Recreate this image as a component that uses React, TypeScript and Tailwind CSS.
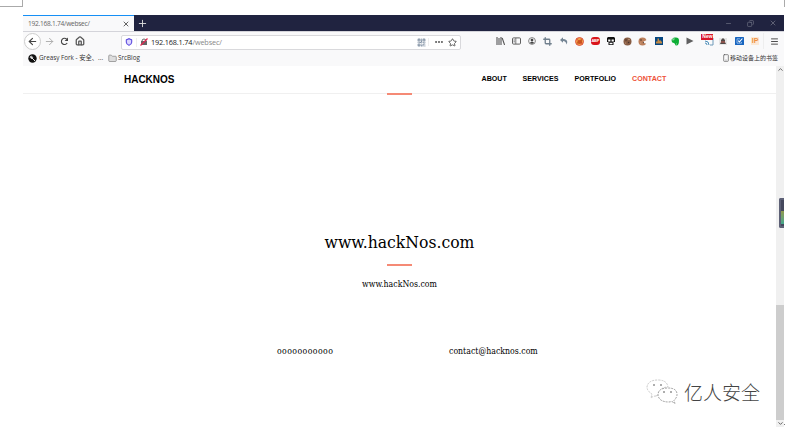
import React from "react";
import {
  ArrowLeft, ArrowRight, House, X, Plus, Shield, Star, Ellipsis,
  Crop, Menu, Minus, Copy, ChevronUp, ChevronDown, Folder, Smartphone, QrCode,
} from "lucide-react";

const ui = "font-['Open_Sans','Noto_Sans_CJK_SC',sans-serif]";
const serif = "font-['DejaVu_Serif_Condensed','DejaVu_Serif',serif] [font-stretch:condensed]";

function Slot({ children }: { children: React.ReactNode }) {
  return <span className="flex h-4 w-[15.87px] shrink-0 items-center justify-center">{children}</span>;
}

function Cookie({ bitten = false }: { bitten?: boolean }) {
  return (
    <svg width="9" height="9" viewBox="0 0 9 9">
      <circle cx="4.5" cy="4.5" r="4" fill={bitten ? "#bc805c" : "#875c43"} />
      <circle cx="3" cy="3" r=".8" fill="#49352c" />
      <circle cx="5.6" cy="5.5" r=".8" fill="#49352c" />
      <circle cx="2.7" cy="6" r=".6" fill="#d1aa8b" />
      {bitten ? <path d="M5.5 4.5 9 3v4L6 6Z" fill="#f9f9fa" /> : <circle cx="6" cy="2.5" r=".7" fill="#d1aa8b" />}
    </svg>
  );
}

function Extensions() {
  return (
    <div className="flex items-center text-[#555]">
      <Slot>
        <svg width="9" height="8" viewBox="0 0 9 8" stroke="#555" strokeWidth="1.1"><path d="M1 0v8M3 1v7M5 0v8M6.2 1l2.4 7" /></svg>
      </Slot>
      <Slot>
        <svg width="9" height="8" viewBox="0 0 9 8" fill="none" stroke="#606060"><rect x=".5" y=".9" width="8" height="6.2" rx="1" /><path d="M3.8 1v6M1.5 3h1.5M1.5 4.8h1.5" strokeWidth=".8" /></svg>
      </Slot>
      <Slot>
        <svg width="8" height="8" viewBox="0 0 8 8"><circle cx="4" cy="4" r="3.4" fill="none" stroke="#777" strokeWidth=".9" /><circle cx="4" cy="3.1" r="1.4" fill="#444" /><path d="M1.8 6Q4 3.4 6.2 6Q4 7.5 1.8 6" fill="#444" /></svg>
      </Slot>
      <Slot><Crop size={9} strokeWidth={3.5} className="text-[#71808d]" /></Slot>
      <Slot>
        <svg width="8" height="8" viewBox="0 0 8 8"><path d="M3 .2 0 3l3 2.8V4q3 0 3.5 3.5Q9 2.5 3 2Z" fill="#758594" /></svg>
      </Slot>
      <Slot>
        <svg width="9" height="9" viewBox="0 0 9 9"><circle cx="4.5" cy="4.5" r="4" fill="#f2a04a" stroke="#d9483a" strokeWidth=".9" /><path d="M2 6.5Q2 3 5 3l2-1v4L5 7Z" fill="#c8571c" /><path d="m1.5 2 6 5" stroke="#d33f2f" strokeWidth=".8" /></svg>
      </Slot>
      <Slot>
        <span className="flex h-[8px] w-[9px] items-center justify-center rounded-[3px] bg-[#d9151b] font-['Liberation_Sans',sans-serif] text-[4px] font-bold tracking-[-.2px] text-white">ABP</span>
      </Slot>
      <Slot>
        <svg width="8" height="8" viewBox="0 0 8 8"><path d="M1 0h6l1 1v4H6.5v3h-5V5H0V1Z" fill="#111" /><path d="M1.2 2.4h2.2v2H1.2ZM4.6 2.4h2.2v2H4.6ZM2.5 5.7h3v1.6h-3Z" fill="white" /></svg>
      </Slot>
      <Slot><Cookie /></Slot>
      <Slot><Cookie bitten /></Slot>
      <Slot>
        <svg width="8" height="8" viewBox="0 0 8 8"><path d="M0 0h8v8H0Z" fill="#064781" /><path d="M1 6.4V4.5h1.5V1.5H4V4l1-1 2 2v1.4Z" fill="#c58b45" /></svg>
      </Slot>
      <Slot>
        <svg width="8" height="9" viewBox="0 0 8 9"><path d="M.5 2.5 3 .5h2q3 0 3 3Q8 8.5 5.5 8.5 4 8.5 4 7l-1-1Q.5 6 .5 2.5" fill="#0dae35" /><path d="M.7 2.8H3V.5M5 7h1" stroke="#ddf4e0" strokeWidth=".6" fill="none" /></svg>
      </Slot>
      <Slot>
        <svg width="8" height="8" viewBox="0 0 8 8"><path d="m.5.5 7 3.5-7 3.5Z" fill="#606060" /></svg>
      </Slot>
      <span className="relative flex h-4 w-[17px] shrink-0 items-center justify-center pl-1">
        <svg width="10" height="9" viewBox="0 0 10 9" fill="none"><path d="M1 2v-1h8v7H6" stroke="#6d99b8" /><path d="M1 4q4 0 4 4M1 6q2 0 2 2" stroke="#4b8db8" /></svg>
        <span className="absolute top-px left-[3px] flex h-[6px] w-3 items-center justify-center bg-[#d9152a] font-['Liberation_Sans',sans-serif] text-[5px] font-bold text-white">New</span>
      </span>
      <Slot>
        <svg width="8" height="8" viewBox="0 0 8 8"><path d="M0 1h8v7H0Z" fill="#e6e6e6" /><path d="m2 3 2-2 2 2v2L7 7H1l1-2Z" fill="#514a48" /><path d="M2 5h4" stroke="#df6255" strokeWidth=".8" /></svg>
      </Slot>
      <Slot>
        <svg width="9" height="8" viewBox="0 0 9 8"><rect width="9" height="8" rx=".6" fill="#1765c0" /><path d="M5 1.8H2v4.4h4.5V5" fill="none" stroke="#b9d3f0" strokeWidth=".7" /><path d="m3.2 3.7 1.2 1.2 3-3.4" fill="none" stroke="white" strokeWidth="1.1" /></svg>
      </Slot>
      <Slot>
        <span className="flex h-[8px] w-[8px] items-center justify-center bg-[#fce9d6] font-['Liberation_Sans',sans-serif] text-[7px] font-bold text-[#ed9142]">IP</span>
      </Slot>
    </div>
  );
}

function BrowserChrome() {
  return (
    <div className={`${ui} text-[#222]`}>
      <div className="flex h-4 bg-[#202340]">
        <div className="flex w-[111px] flex-col bg-[#f9f9fa] text-[6.6px] text-[#666]">
          <span className="h-[1.4px] w-full shrink-0 bg-[#168ff5]" />
          <div className="flex flex-1 items-center pl-[5px]">
            <span className="w-[92px] shrink-0 tracking-[-.26px]">192.168.1.74/websec/</span>
            <span className="pl-[2px]"><X size={8} strokeWidth={2.5} className="text-[#444]" /></span>
          </div>
        </div>
        <Plus size={11} strokeWidth={2} className="mt-[3px] ml-[3px] text-[#ddd]" />
        <div className="ml-auto flex items-center gap-[15px] pr-[7px] text-[#7b7d8e]">
          <Minus size={7} /><Copy size={7} className="-scale-x-100" /><X size={8} />
        </div>
      </div>
      <div className="flex h-[19px] items-center border-t border-[#d4d4da] bg-[#f9f9fa]">
        <span className="ml-px flex h-[17px] w-[17px] shrink-0 items-center justify-center rounded-full border border-[#ccc] bg-white"><ArrowLeft size={11} strokeWidth={2.4} className="text-[#444]" /></span>
        <ArrowRight size={11} strokeWidth={2} className="ml-[3px] text-[#aaa]" />
        <svg width="9" height="9" viewBox="0 0 9 9" className="ml-[5px] shrink-0"><path d="M7.2 6A3.1 3.1 0 1 1 6.7 2.2" fill="none" stroke="#444" strokeWidth="1.1" /><path d="M8 .5V4H4.6Z" fill="#444" /></svg>
        <House size={10} strokeWidth={3} className="ml-[6px] text-[#555]" />
        <div className="mt-[2px] ml-[36px] flex h-[15px] w-[340px] shrink-0 items-center rounded-[2px] border border-[#d9d9dc] bg-white">
          <Shield size={8} strokeWidth={3.5} className="ml-[3px] fill-[#ddd7ff] text-[#6554e0]" />
          <span className="ml-[3px] h-[9px] w-px bg-[#eee]" />
          <svg width="8" height="8" viewBox="0 0 8 8" className="ml-[3px]"><path d="M1 3h6v4H1Z" fill="#666" /><path d="M2 3Q2 1 4 1t2 2" fill="none" stroke="#666" /><path d="M.5 7.5 7.5.5" stroke="#e32650" strokeWidth="1.2" /></svg>
          <span className="ml-[3px] text-[7.3px] tracking-[-.16px] text-[#222]">192.168.1.74<span className="text-[#888]">/websec/</span></span>
          <QrCode size={9} className="ml-auto text-[#8796a8]" strokeWidth={3} />
          <span className="ml-[2px] h-2 w-px bg-[#eee]" />
          <Ellipsis size={10} strokeWidth={3} className="ml-[5px] text-[#555]" />
          <Star size={9} strokeWidth={2.5} className="mr-[3px] ml-[4px] text-[#555]" />
        </div>
        <div className="ml-auto flex items-center"><Extensions /><span className="h-4 w-px bg-[#eee]" /><Menu size={9} strokeWidth={2.5} className="mr-[5px] ml-[6px] text-[#444]" /></div>
      </div>
      <div className="flex h-4 items-center bg-[#f9f9fa] text-[6.3px] text-[#333]">
        <svg width="9" height="9" viewBox="0 0 9 9" className="ml-[5px]"><circle cx="4.5" cy="4.5" r="4.2" fill="#111" /><path d="m3 3 4 4M2 3.2 3.3 2l1.4 1.4-1.3 1.2Z" stroke="#fff" fill="none" strokeWidth=".9" /></svg>
        <span className="ml-[2px] flex w-[68px] whitespace-nowrap"><span>Greasy Fork - 安全、</span><span>...</span></span>
        <Folder size={9} strokeWidth={2} className="ml-[1px] shrink-0 fill-[#ddd] text-[#888]" />
        <span className="ml-[1px]">SrcBlog</span>
        <Smartphone size={8} strokeWidth={2} className="ml-auto text-[#555]" />
        <span className="mr-[6px] w-[48px] whitespace-nowrap text-[6px]">移动设备上的书签</span>
      </div>
    </div>
  );
}

export default function App() {
  return (
    <div className="relative h-[427px] w-[785px] overflow-hidden bg-white">
      <span className="absolute top-0 left-0 h-[7px] w-[23px] border-r border-b border-[#aaa]" />
      <span className="absolute top-0 right-0 h-[7px] w-px bg-[#aaa]" />
      <div className="ml-[23px] w-[761px] pt-[15px]">
        <BrowserChrome />
        <div className="flex h-[361px]">
          <main className="flex w-[753px] flex-col">
            <header className="flex h-7 items-center border-b border-[#f0f0f0] font-['Liberation_Sans',Arial,sans-serif] text-[7.1px] font-bold text-black">
              <span className="ml-[101px] text-[10px] tracking-[-.02px]">HACKNOS</span>
              <nav className="ml-auto flex pr-[109px] leading-[9px] tracking-[.02px]">
                <span className="w-[41px]">ABOUT</span>
                <span className="w-[52px]">SERVICES</span>
                <span className="w-[57.5px]">PORTFOLIO</span>
                <span className="w-[35px] text-[#ee5138]">CONTACT</span>
              </nav>
            </header>
            <span className="-mt-px ml-[364px] h-[2px] w-[25px] bg-[#f58a75]" />
            <section className={`flex flex-col items-center pt-[135px] text-black ${serif}`}>
              <h1 className="h-6 text-[17.4px] leading-6 whitespace-nowrap">www.hackNos.com</h1>
              <span className="mt-[10px] h-[2px] w-[25px] bg-[#f58a75]" />
              <p className="mt-3 h-3 text-[8.7px] leading-3">www.hackNos.com</p>
              <div className="mt-[55px] flex w-full pl-[254px] text-[8.7px] leading-3">
                <span className="w-[172px] tracking-[.42px]">ooooooooooo</span><span>contact@hacknos.com</span>
              </div>
            </section>
            <div className="mt-[20px] ml-[623px] flex h-[30px] items-center">
              <svg width="32" height="26" viewBox="0 0 32 26" fill="white" stroke="#888" strokeWidth=".8" strokeDasharray="2 1">
                <path d="M10 17Q7 17 5 19l1-4Q1 12 1 8 2 1 12 1q9 0 10 7-8 0-10 8Z" stroke="#bbb" />
                <path d="M26 22.5l3 2-1-3q3-3 3-6Q31 9 22 9q-10 0-10 7 1 7 11 7Z" />
                <path d="M7 6h2M14 6h2M17 13h2M24 13h2" stroke="#333" />
              </svg>
              <span className="ml-[6px] font-['Noto_Sans_CJK_SC',sans-serif] text-[19px] leading-6 font-light whitespace-nowrap text-[#444]">亿人安全</span>
            </div>
          </main>
          <aside className="flex w-2 flex-col items-center bg-[#f0f0f0] text-[#555]">
            <ChevronUp size={7} strokeWidth={3} />
            <span className="mt-auto h-[115px] w-full bg-[#cdcdcd]" />
            <ChevronDown size={7} strokeWidth={3} />
          </aside>
        </div>
      </div>
      <div className="absolute top-[198px] right-px h-[30px] w-[5px] rounded-l-[2px] border-2 border-r-0 border-[#5d6076] bg-[#45485d] pt-[11px]">
        <span className="block h-[13px] w-[3px] bg-linear-to-b from-[#8e994d] to-[#40a78d]" />
      </div>
      <span className="absolute right-0 bottom-[2px] h-px w-px bg-[#777]" />
    </div>
  );
}
